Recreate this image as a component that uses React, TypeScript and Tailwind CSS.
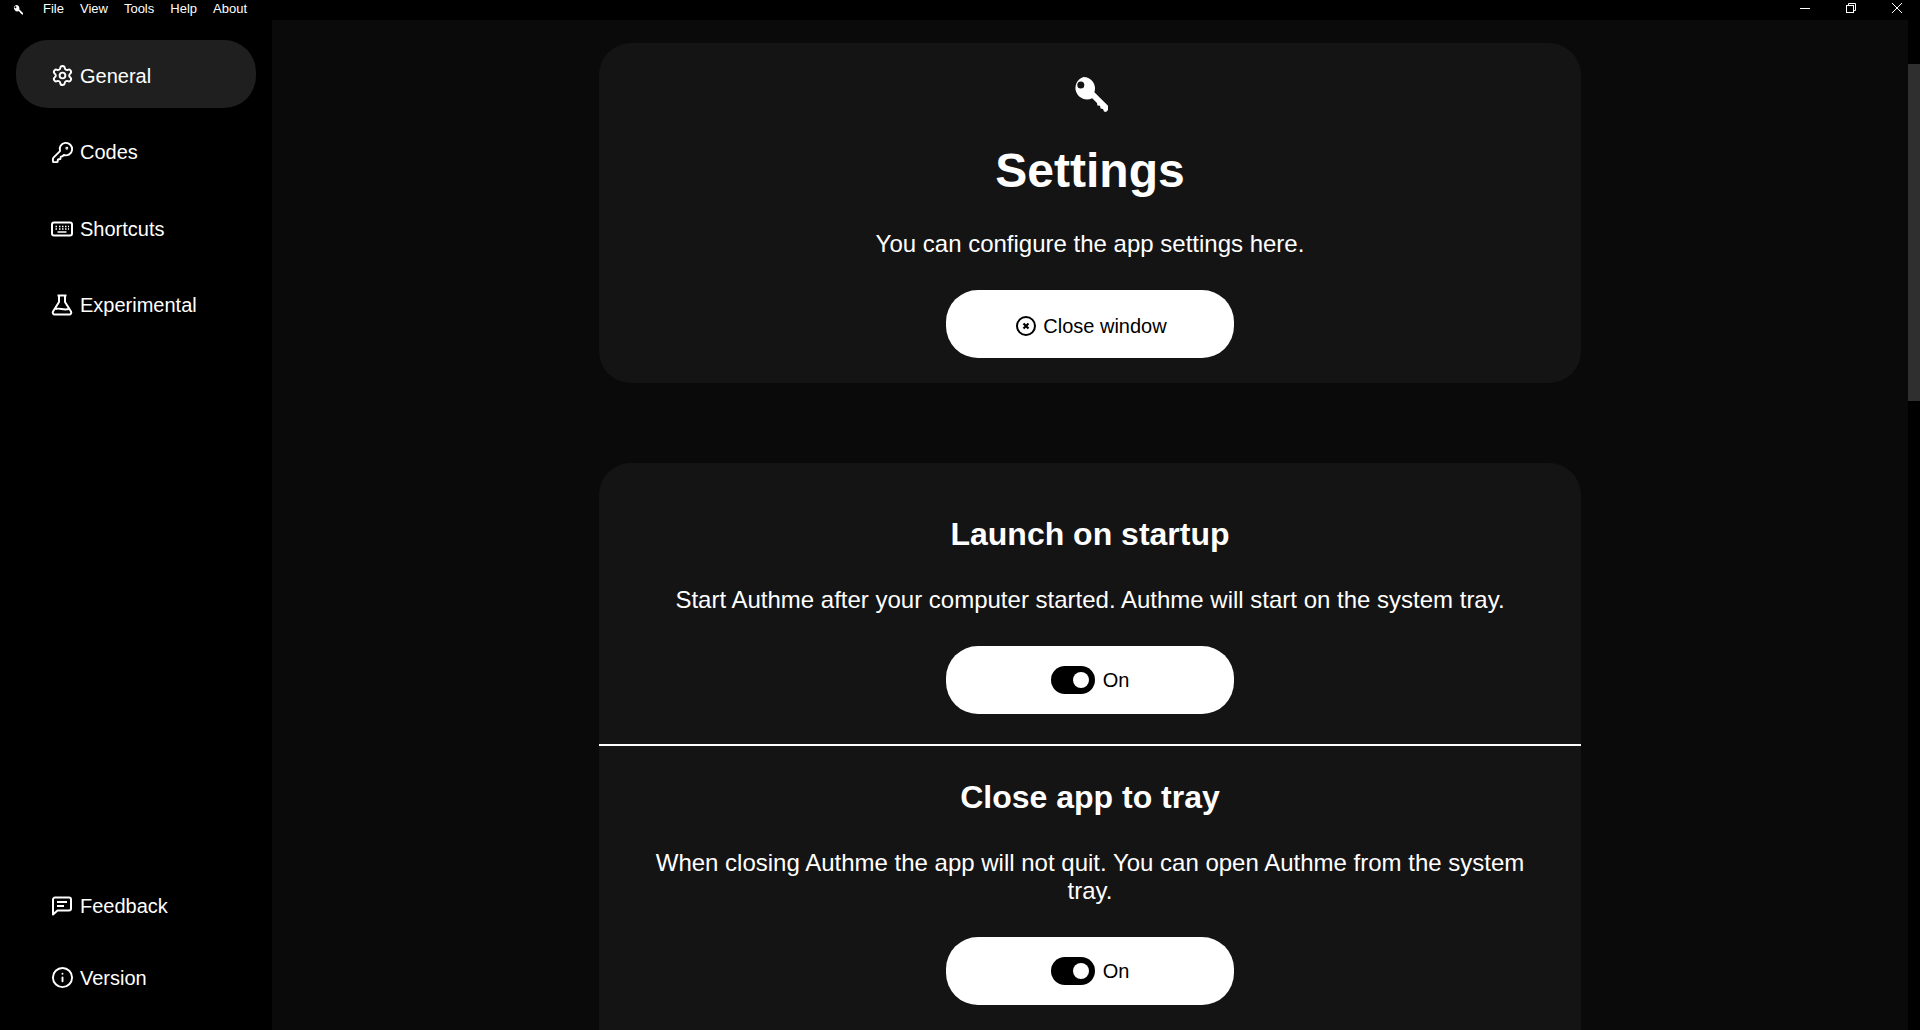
import { Info, KeyRound, Settings } from 'lucide-react'
import type { ReactNode } from 'react'

function KeyLogo({ className }: { className: string }) {
    return (
        <svg className={className} viewBox="0 0 36 36" fill="currentColor">
            <path fillRule="evenodd" d="M11.500 0a11.500 11.500 0 0 1 10.900 15.200L36 28.800V33l-2 2-2-.6-1-2.400-2.400-.6-.6-2.600-2.600-.4-.4-2.400-4.800-4.800A11.500 11.500 0 1 1 11.500 0ZM8.800 4.500a3.500 3.500 0 1 0 0 7 3.500 3.500 0 0 0 0-7Z" />
        </svg>
    )
}

function ToggleOn() {
    return (
        <svg width="44" height="28" viewBox="0 0 44 28">
            <rect width="44" height="28" rx="14" fill="#000" />
            <circle cx="30" cy="14" r="8" fill="#fff" />
        </svg>
    )
}

function CloseIcon() {
    return (
        <svg width="22" height="22" viewBox="0 0 22 22" fill="none" stroke="currentColor" strokeWidth="2">
            <circle cx="11" cy="11" r="9" />
            <path d="M8.500 8.500l5 5M13.500 8.500l-5 5" strokeWidth="2.200" />
        </svg>
    )
}

function KeyboardIcon() {
    return (
        <svg width="22" height="22" viewBox="0 0 22 22" fill="none" stroke="currentColor" strokeWidth="2">
            <rect x="1" y="4.500" width="20" height="13" rx="2" />
            <path d="M4.500 8.500h1.500M8 8.500h1.500M11 8.500h1.500M14 8.500h1.500M17 8.500h1M4.500 11h1.500M8 11h1.500M11 11h1.500M14 11h1.500M17 11h1M6.500 14h9" strokeWidth="1.600" />
        </svg>
    )
}

function FlaskIcon() {
    return (
        <svg width="22" height="22" viewBox="0 0 22 22" fill="none" stroke="currentColor" strokeWidth="2" strokeLinejoin="round">
            <path d="M6.500 1.500h9M8 1.500v6.500L2 17.500a2 2 0 0 0 1.700 3h14.600a2 2 0 0 0 1.700-3L14 8V1.500M4.500 15c4-1.500 8 1.500 13 0" />
        </svg>
    )
}

function FeedbackIcon() {
    return (
        <svg width="22" height="22" viewBox="0 0 22 22" fill="none" stroke="currentColor" strokeWidth="2" strokeLinejoin="round">
            <path d="M2 19.500V4.500a2 2 0 0 1 2-2h14a2 2 0 0 1 2 2v9a2 2 0 0 1-2 2H6.500L2 19.500Z" />
            <path d="M6 7h10M6 11h7" />
        </svg>
    )
}

function NavItem({ icon, label, active }: { icon: ReactNode; label: string; active?: boolean }) {
    return (
        <a className={"flex h-[68px] w-[240px] items-center gap-[7px] rounded-[32px] pt-[3px] pl-[35px] text-[20px] text-white " + (active ? "bg-[#1f1f1f]" : "")}>
            <span className="flex w-[22px] justify-center">{icon}</span>
            <span>{label}</span>
        </a>
    )
}

function PillButton({ children, className }: { children: ReactNode; className: string }) {
    return (
        <button className={"flex h-[68px] w-[288px] items-center justify-center rounded-[32px] bg-white text-[20px] text-black " + className}>
            {children}
        </button>
    )
}

function Setting({ title, text, children }: { title: string; text: string; children: ReactNode }) {
    return (
        <div className="flex flex-col items-center">
            <h2 className="text-[32px] leading-[40px] font-bold text-white">{title}</h2>
            <p className="mt-[32px] w-[900px] text-center text-[24px] leading-[28px] text-white">{text}</p>
            <div className="mt-[32px]">{children}</div>
        </div>
    )
}

export default function App() {
    return (
        <div className="flex h-screen flex-col overflow-hidden bg-black font-['Liberation_Sans',Arial,sans-serif]">
            <div className="flex h-[20px] shrink-0 items-center text-white">
                <KeyLogo className="ml-[13px] h-[10px] w-[10px]" />
                <div className="mb-[2px] ml-[20px] flex gap-[16px] text-[13px]">
                    <span>File</span>
                    <span>View</span>
                    <span>Tools</span>
                    <span>Help</span>
                    <span>About</span>
                </div>
                <div className="mr-[18px] mb-[4px] ml-auto flex items-center gap-[36px]">
                    <svg width="10" height="10" viewBox="0 0 10 10" stroke="#fff"><path d="M0 5.500h10" /></svg>
                    <svg width="10" height="10" viewBox="0 0 10 10" fill="none" stroke="#fff"><path d="M2.500 2.500V.5h7v7h-2" /><rect x=".5" y="2.500" width="7" height="7" /></svg>
                    <svg width="10" height="10" viewBox="0 0 10 10" stroke="#fff"><path d="M0 0l10 10M10 0L0 10" /></svg>
                </div>
            </div>
            <div className="flex min-h-0 flex-1">
                <aside className="flex w-[272px] shrink-0 flex-col justify-between bg-black pt-[20px] pb-[20px] pl-[16px]">
                    <nav className="flex flex-col gap-[8.5px]">
                        <NavItem active icon={<Settings size={23} className="shrink-0" />} label="General" />
                        <NavItem icon={<KeyRound size={23} className="shrink-0" />} label="Codes" />
                        <NavItem icon={<KeyboardIcon />} label="Shortcuts" />
                        <NavItem icon={<FlaskIcon />} label="Experimental" />
                    </nav>
                    <nav className="flex flex-col gap-[4px]">
                        <NavItem icon={<FeedbackIcon />} label="Feedback" />
                        <NavItem icon={<Info size={23} className="shrink-0" />} label="Version" />
                    </nav>
                </aside>
                <main className="flex min-w-0 flex-1 flex-col items-center overflow-hidden bg-[#0a0a0a] pt-[23px]">
                    <section className="flex w-[982px] shrink-0 flex-col items-center rounded-[32px] bg-[#141414] pt-[34px] pb-[25px]">
                        <KeyLogo className="h-[36px] w-[36px] text-white" />
                        <h1 className="mt-[30px] text-[48px] leading-[56px] font-bold text-white">Settings</h1>
                        <p className="mt-[31px] text-[24px] leading-[28px] text-white">You can configure the app settings here.</p>
                        <div className="mt-[32px]">
                            <PillButton className="gap-[6px] pt-[3px] pl-[2px]"><CloseIcon />Close window</PillButton>
                        </div>
                    </section>
                    <section className="mt-[80px] flex w-[982px] shrink-0 flex-col rounded-[32px] bg-[#141414] pt-[51px] pb-[60px]">
                        <Setting title="Launch on startup" text="Start Authme after your computer started. Authme will start on the system tray.">
                            <PillButton className="gap-[8px]"><ToggleOn />On</PillButton>
                        </Setting>
                        <hr className="mt-[30px] mb-[31px] h-[2px] border-0 bg-white" />
                        <Setting title="Close app to tray" text="When closing Authme the app will not quit. You can open Authme from the system tray.">
                            <PillButton className="gap-[8px]"><ToggleOn />On</PillButton>
                        </Setting>
                    </section>
                </main>
                <div className="w-[12px] shrink-0 bg-black">
                    <div className="mt-[44px] h-[337px] bg-[#2f2f2f]" />
                </div>
            </div>
        </div>
    )
}
